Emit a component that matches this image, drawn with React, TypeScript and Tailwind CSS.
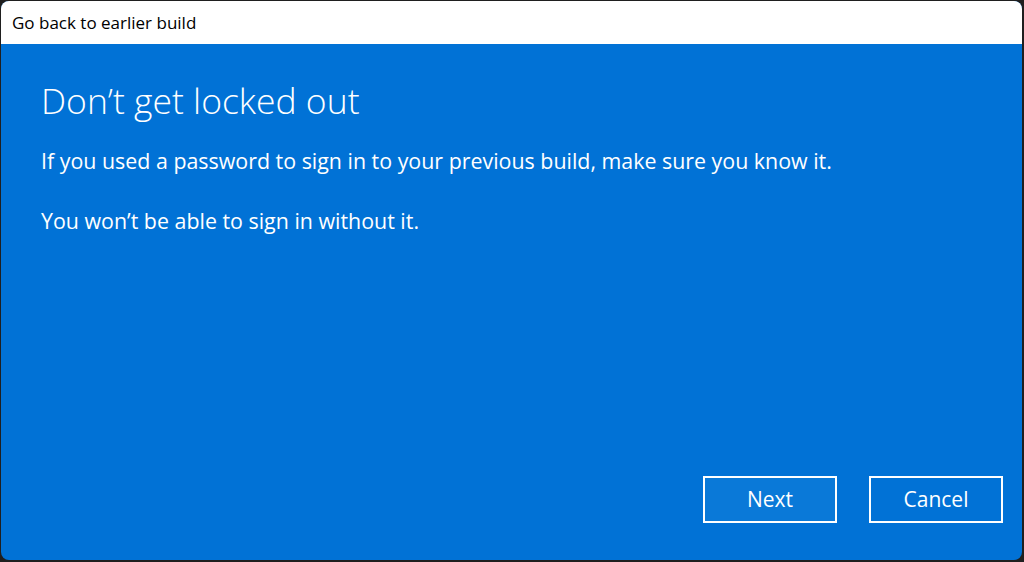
export default function App() {
  return (
    <div className="h-[562px] w-[1024px] bg-[#1f1f1f] pl-px pr-[2px] pt-px pb-[2px] font-['Open_Sans',sans-serif]">
      <div className="flex h-full flex-col overflow-hidden rounded-lg bg-[#0172d6]">
        <div className="flex h-[43px] shrink-0 items-center bg-white pl-[11px] text-[17px] text-black">
          Go back to earlier build
        </div>
        <div className="flex flex-1 flex-col pl-10 pr-[19px] pt-[34px] text-white">
          <h1 className="text-[35.5px] font-light leading-[44px]">Don’t get locked out</h1>
          <p className="mt-[25px] text-[21.4px] leading-7">
            If you used a password to sign in to your previous build, make sure you know it.
          </p>
          <p className="mt-8 text-[21.4px] leading-7">You won’t be able to sign in without it.</p>
          <div className="mt-auto mb-[37px] flex justify-end gap-8">
            <button className="h-[47px] w-[134px] border-2 border-white bg-[#0a79d8] text-[21px] text-white">
              Next
            </button>
            <button className="h-[47px] w-[134px] border-2 border-white text-[21px] text-white">
              Cancel
            </button>
          </div>
        </div>
      </div>
    </div>
  );
}
